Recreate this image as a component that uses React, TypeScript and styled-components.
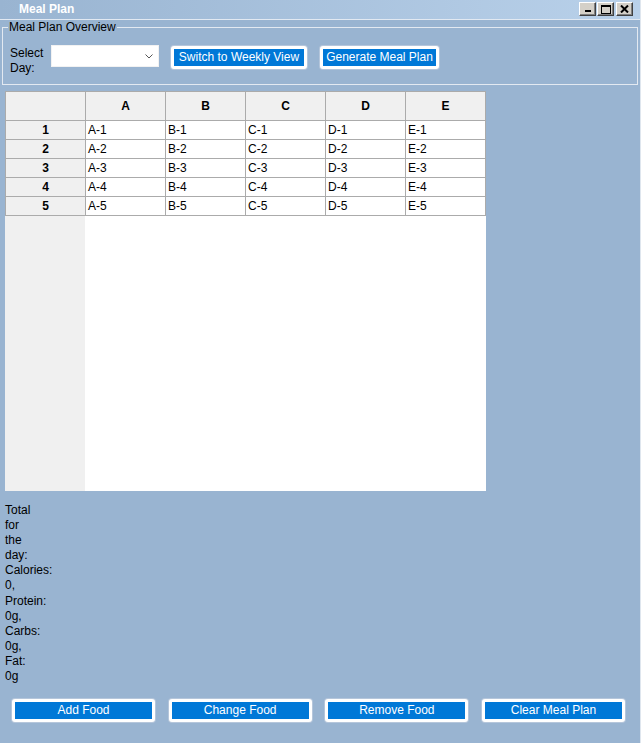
import React from "react";
import styled, { createGlobalStyle } from "styled-components";

const GlobalStyle = createGlobalStyle`
  html, body { margin: 0; padding: 0; }
  body {
    background: #99b4d1;
    font-family: "Liberation Sans", Arial, sans-serif;
    font-size: 12px;
    color: #000;
  }
  * { box-sizing: border-box; }
`;

const Window = styled.div`
  width: 641px;
  height: 743px;
  display: flex;
  flex-direction: column;
  background: #99b4d1;
  border-right: 1px solid #dfe6ee;
  overflow: hidden;
`;

const TitleBar = styled.div`
  height: 20px;
  flex: none;
  display: flex;
  align-items: center;
  padding-left: 19px;
  padding-right: 7px;
  background: linear-gradient(to right, #99b4d1, #b9d1ea);
  border-bottom: 1px solid #e2e9f2;
`;

const Title = styled.span`
  flex: 1;
  color: #fff;
  font-weight: bold;
  font-size: 12px;
  line-height: 19px;
`;

const Controls = styled.div`
  display: flex;
  gap: 1px;
  margin-top: -1px;
`;

const CtrlButton = styled.div<{ $gapLeft?: number }>`
  width: 17px;
  height: 14px;
  margin-left: ${(p) => p.$gapLeft ?? 0}px;
  background: #d4d0c8;
  border-top: 1px solid #fff;
  border-left: 1px solid #fff;
  border-right: 1px solid #404040;
  border-bottom: 1px solid #404040;
  box-shadow: inset -1px -1px 0 #808080;
  display: flex;
  align-items: center;
  justify-content: center;
`;

const GroupBox = styled.fieldset`
  margin: 0 2px 0 2px;
  padding: 0 0 8px 0;
  border: 1px solid #e3e9f1;
  min-width: 0;
  flex: none;
`;

const Legend = styled.legend`
  margin-left: 5px;
  padding: 0 1px;
  font-size: 12px;
  line-height: 14px;
`;

const ControlRow = styled.div`
  display: flex;
  align-items: flex-start;
  padding: 11px 0 0 7px;
`;

const FieldLabel = styled.label`
  width: 41px;
  line-height: 15px;
  padding-top: 1px;
  flex: none;
`;

const LabelText = styled.span`
  display: block;
  width: 1px;
  white-space: normal;
`;

const Combo = styled.div`
  width: 108px;
  height: 22px;
  background: #fff;
  border: 1px solid #f2f2f2;
  display: flex;
  align-items: center;
  justify-content: flex-end;
  padding-right: 5px;
  flex: none;
`;

const ActionButton = styled.button<{ $w: number; $ml?: number }>`
  width: ${(p) => p.$w}px;
  height: 23px;
  margin-left: ${(p) => p.$ml ?? 0}px;
  margin-top: 1px;
  padding: 0;
  background: #0078d7;
  color: #fff;
  border: 3px solid #fff;
  border-radius: 3px;
  box-shadow: 0 0 0 1px rgba(200, 210, 225, 0.6);
  font-family: "Liberation Sans", Arial, sans-serif;
  font-size: 12px;
  line-height: 15px;
  flex: none;
  cursor: default;
`;

const Sheet = styled.div`
  margin: 6px 0 0 5px;
  width: 481px;
  height: 400px;
  display: flex;
  flex-direction: column;
  flex: none;
`;

const Grid = styled.div`
  display: grid;
  grid-template-columns: repeat(6, 79px);
  grid-template-rows: 28px repeat(5, 18px);
  gap: 1px;
  background: #ababab;
  border: 1px solid #ababab;
`;

const Cell = styled.div<{ $head?: boolean }>`
  background: ${(p) => (p.$head ? "#f0f0f0" : "#fff")};
  font-weight: ${(p) => (p.$head ? "bold" : "normal")};
  padding-left: ${(p) => (p.$head ? 0 : 2)}px;
  display: flex;
  align-items: center;
  justify-content: ${(p) => (p.$head ? "center" : "flex-start")};
  font-size: 12px;
`;

const Filler = styled.div`
  flex: 1;
  display: flex;
`;

const FillerHeader = styled.div`
  width: 80px;
  background: #f0f0f0;
`;

const FillerBody = styled.div`
  flex: 1;
  background: #fff;
`;

const Totals = styled.div`
  margin: 12px 0 0 5px;
  width: 1px;
  line-height: 15.1px;
  font-size: 12px;
`;

const BottomRow = styled.div`
  margin-top: auto;
  display: flex;
  gap: 13.67px;
  padding: 0 0 21px 12px;
`;

const cols = ["A", "B", "C", "D", "E"];
const rows = [1, 2, 3, 4, 5];

export default function App() {
  return (
    <>
      <GlobalStyle />
      <Window>
        <TitleBar>
          <Title>Meal Plan</Title>
          <Controls>
            <CtrlButton>
              <svg width="8" height="8" viewBox="0 0 8 8">
                <rect x="1" y="5" width="6" height="2" fill="#000" />
              </svg>
            </CtrlButton>
            <CtrlButton>
              <svg width="10" height="9" viewBox="0 0 10 9">
                <rect x="0.5" y="0.5" width="9" height="8" fill="none" stroke="#000" />
                <rect x="0" y="0" width="10" height="2" fill="#000" />
              </svg>
            </CtrlButton>
            <CtrlButton $gapLeft={1}>
              <svg width="9" height="8" viewBox="0 0 9 8">
                <path d="M1 0.5 L8 7.5 M8 0.5 L1 7.5" stroke="#000" strokeWidth="2" />
              </svg>
            </CtrlButton>
          </Controls>
        </TitleBar>

        <GroupBox>
          <Legend>Meal Plan Overview</Legend>
          <ControlRow>
            <FieldLabel>
              <LabelText>Select Day:</LabelText>
            </FieldLabel>
            <Combo>
              <svg width="8" height="5" viewBox="0 0 8 5">
                <path d="M0.5 0.5 L4 4 L7.5 0.5" fill="none" stroke="#555" strokeWidth="1" />
              </svg>
            </Combo>
            <ActionButton $w={136} $ml={12}>Switch to Weekly View</ActionButton>
            <ActionButton $w={119} $ml={13}>Generate Meal Plan</ActionButton>
          </ControlRow>
        </GroupBox>

        <Sheet>
          <Grid>
            <Cell $head />
            {cols.map((c) => (
              <Cell $head key={c}>{c}</Cell>
            ))}
            {rows.map((r) => (
              <React.Fragment key={r}>
                <Cell $head>{r}</Cell>
                {cols.map((c) => (
                  <Cell key={c}>{`${c}-${r}`}</Cell>
                ))}
              </React.Fragment>
            ))}
          </Grid>
          <Filler>
            <FillerHeader />
            <FillerBody />
          </Filler>
        </Sheet>

        <Totals>Total for the day: Calories: 0, Protein: 0g, Carbs: 0g, Fat: 0g</Totals>

        <BottomRow>
          <ActionButton $w={143}>Add Food</ActionButton>
          <ActionButton $w={143}>Change Food</ActionButton>
          <ActionButton $w={143}>Remove Food</ActionButton>
          <ActionButton $w={143}>Clear Meal Plan</ActionButton>
        </BottomRow>
      </Window>
    </>
  );
}
